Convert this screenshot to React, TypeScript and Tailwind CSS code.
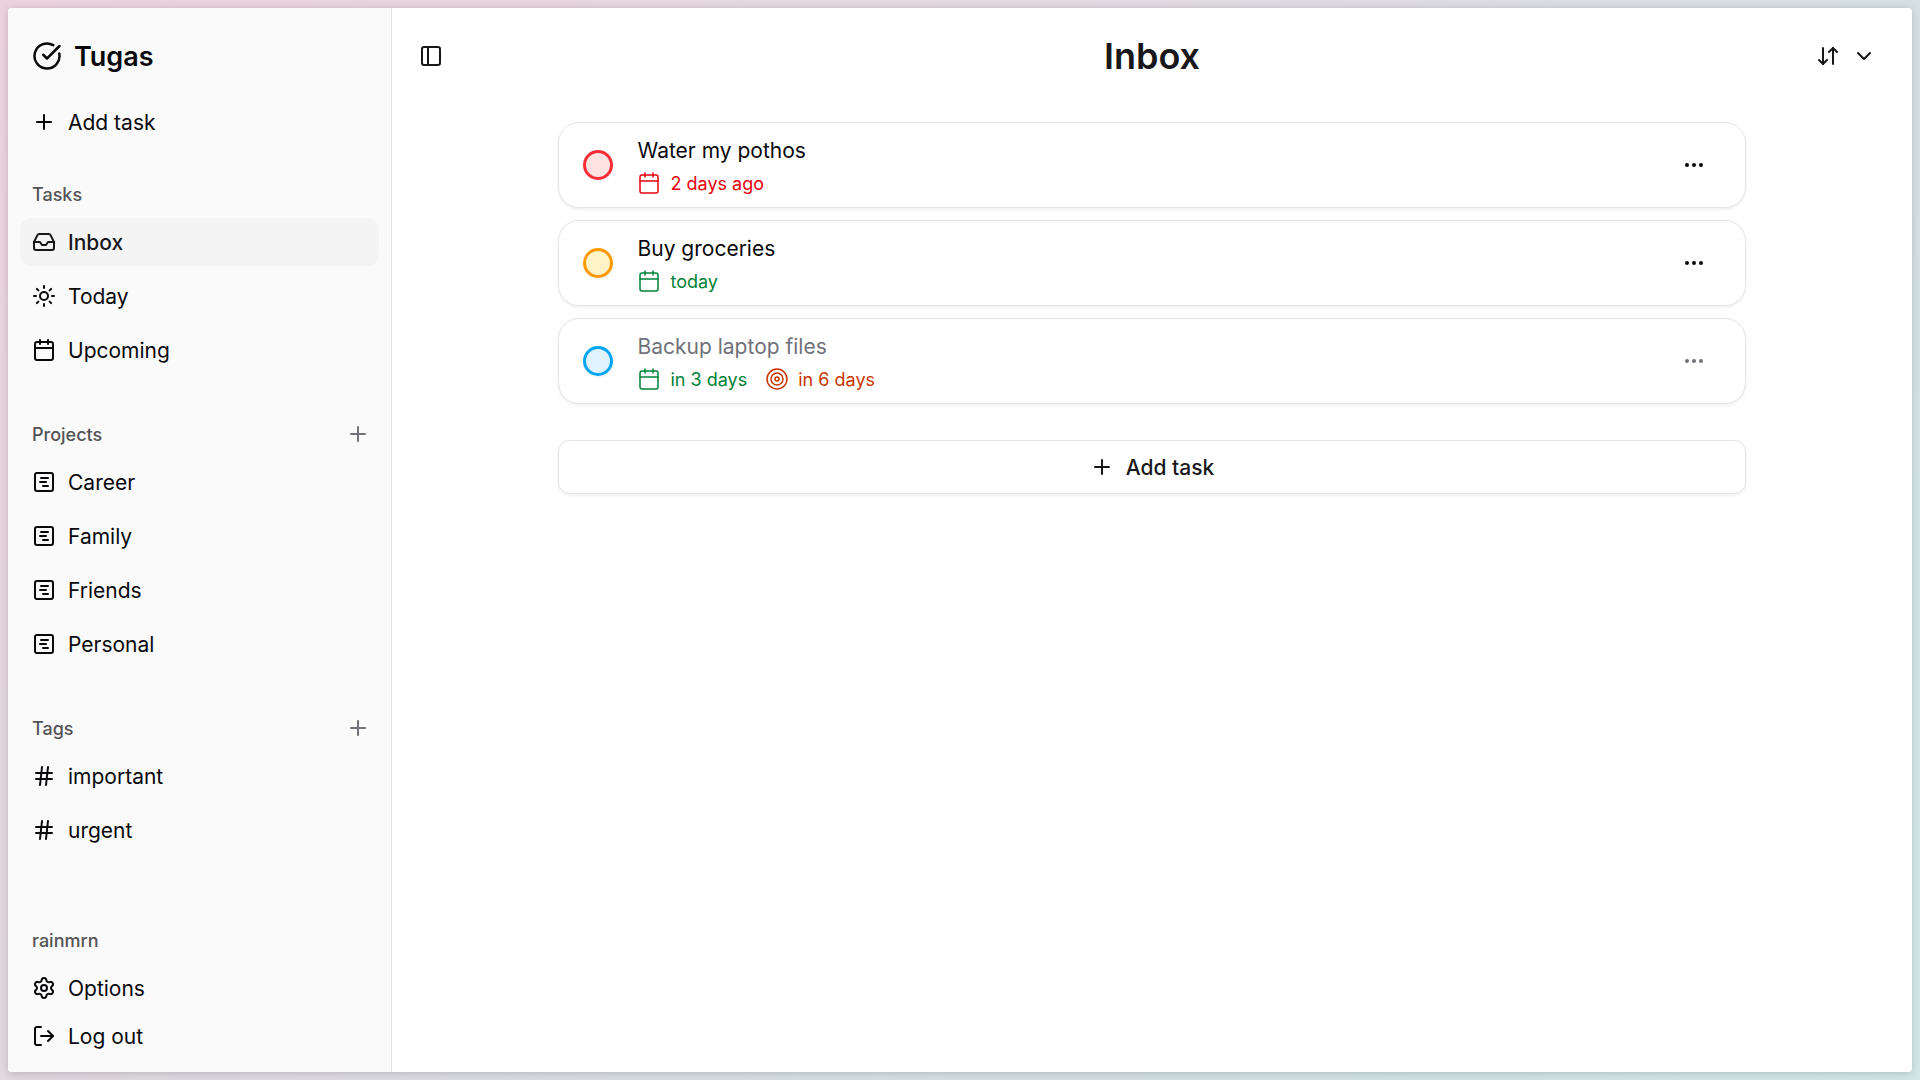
import React from "react";
import {
  ArrowDownUp,
  Calendar,
  ChevronDown,
  CircleCheckBig,
  Ellipsis,
  Hash,
  Inbox,
  LogOut,
  PanelLeft,
  Plus,
  Settings,
  Target,
  type LucideIcon,
} from "lucide-react";

function SquareList({ className }: { className?: string }) {
  return (
    <svg viewBox="0 0 24 24" fill="none" stroke="currentColor" strokeWidth="2" strokeLinecap="round" strokeLinejoin="round" className={className}>
      <rect x="3" y="3" width="18" height="18" rx="2" />
      <path d="M9 8h7M8 12h6M11 16h5" />
    </svg>
  );
}

function SunMedium({ className }: { className?: string }) {
  return (
    <svg viewBox="0 0 24 24" fill="none" stroke="currentColor" strokeWidth="2" strokeLinecap="round" strokeLinejoin="round" className={className}>
      <circle cx="12" cy="12" r="4" />
      <path d="M12 2v2M12 20v2M4.93 4.93l1.41 1.41M17.66 17.66l1.41 1.41M2 12h2M20 12h2M6.34 17.66l-1.41 1.41M19.07 4.93l-1.41 1.41" />
    </svg>
  );
}

type IconType = React.ComponentType<{ className?: string }>;

function NavItem({ icon: Icon, label, active }: { icon: IconType; label: string; active?: boolean }) {
  return (
    <li
      className={
        "flex h-12 items-center gap-3 rounded-xl px-3 text-[21px] leading-[30px] " +
        (active ? "bg-[#f4f4f5] font-[450] text-[#18181b]" : "text-[#09090b]")
      }
    >
      <Icon className="size-6 shrink-0" />
      <span className="pt-0.5">{label}</span>
    </li>
  );
}

function NavLabel({ label, action }: { label: string; action?: boolean }) {
  return (
    <div className="flex h-12 items-center justify-between pr-[9px] pl-3 text-[18px] font-medium text-[#545456]">
      {label}
      {action && <Plus className="size-6 text-[#71717a]" />}
    </div>
  );
}

function NavGroup({ label, action, items }: { label: string; action?: boolean; items: { icon: IconType; label: string; active?: boolean }[] }) {
  return (
    <section className="p-3">
      <NavLabel label={label} action={action} />
      <ul className="flex flex-col gap-1.5">
        {items.map((item) => (
          <NavItem key={item.label} {...item} />
        ))}
      </ul>
    </section>
  );
}

function Meta({ icon: Icon, text, tone }: { icon: LucideIcon; text: string; tone: string }) {
  return (
    <div className={"flex h-6 items-center gap-[9.5px] text-[18px] leading-6 " + tone}>
      <Icon className="size-6" strokeWidth={1.5} />
      <span className="pt-0.5">{text}</span>
    </div>
  );
}

function TaskCard({ title, ring, muted, children }: { title: string; ring: string; muted?: boolean; children: React.ReactNode }) {
  return (
    <li className="flex h-[86px] items-center rounded-[21px] border border-[#e4e4e7] bg-white pr-[39px] pl-6 shadow-[0_1.5px_3px_rgba(0,0,0,0.06)]">
      <div className={"size-[30px] shrink-0 rounded-full border-3 shadow-[0_1.5px_3px_rgba(0,0,0,0.06)] " + ring} />
      <div className="ml-6 flex grow flex-col gap-1.5">
        <div className={"h-[30px] pt-px pl-[0.5px] text-[21px] leading-[30px] " + (muted ? "text-[#71717a]" : "text-[#09090b]")}>{title}</div>
        <div className="flex gap-[17.5px]">{children}</div>
      </div>
      <Ellipsis className={"size-6 " + (muted ? "text-[#71717a]" : "text-[#09090b]")} />
    </li>
  );
}

export default function App() {
  return (
    <div className="h-screen w-screen overflow-hidden bg-[linear-gradient(135deg,#ecd2dd_0%,#dfdbe2_45%,#d7e0e4_62%,#d2e8e7_100%)] p-2 font-['Inter',sans-serif] text-[#09090b]">
      <div className="flex h-full overflow-hidden rounded-[4px] bg-white shadow-[0_1.5px_9px_rgba(0,0,0,0.16)]">
        <aside className="flex w-96 shrink-0 flex-col border-r border-[#e4e4e7] bg-[#fafafa]">
          <div className="flex h-[90px] items-center gap-3 px-6 pt-1.5 text-[27px] font-semibold">
            <CircleCheckBig className="size-[30px]" />
            <span className="pt-0.5">Tugas</span>
          </div>
          <ul className="px-3">
            <NavItem icon={Plus} label="Add task" />
          </ul>
          <nav className="mt-3 flex flex-col gap-3">
            <NavGroup
              label="Tasks"
              items={[
                { icon: Inbox, label: "Inbox", active: true },
                { icon: SunMedium, label: "Today" },
                { icon: Calendar, label: "Upcoming" },
              ]}
            />
            <NavGroup
              label="Projects"
              action
              items={["Career", "Family", "Friends", "Personal"].map((label) => ({ icon: SquareList, label }))}
            />
            <NavGroup label="Tags" action items={["important", "urgent"].map((label) => ({ icon: Hash, label }))} />
          </nav>
          <footer className="mt-auto p-3">
            <NavLabel label="rainmrn" />
            <ul>
              <NavItem icon={Settings} label="Options" />
              <NavItem icon={LogOut} label="Log out" />
            </ul>
          </footer>
        </aside>
        <main className="flex grow flex-col">
          <header className="grid h-24 grid-cols-[1fr_auto_1fr] items-center px-[27px] text-[#18181b]">
            <PanelLeft className="size-6" />
            <h1 className="text-center text-[36px] leading-[54px] font-semibold">Inbox</h1>
            <div className="flex justify-end gap-3 pr-[9px]">
              <ArrowDownUp className="size-6" />
              <ChevronDown className="size-6" />
            </div>
          </header>
          <div className="mx-auto mt-[18px] flex w-[1188px] flex-col gap-9">
            <ul className="flex flex-col gap-3">
              <TaskCard title="Water my pothos" ring="border-[#fb2c36] bg-[#ffe2e2]">
                <Meta icon={Calendar} text="2 days ago" tone="text-[#e7000b]" />
              </TaskCard>
              <TaskCard title="Buy groceries" ring="border-[#fe9a00] bg-[#fef3c6]">
                <Meta icon={Calendar} text="today" tone="text-[#008236]" />
              </TaskCard>
              <TaskCard title="Backup laptop files" ring="border-[#00a6f4] bg-[#dff2fe]" muted>
                <Meta icon={Calendar} text="in 3 days" tone="text-[#008236]" />
                <Meta icon={Target} text="in 6 days" tone="text-[#ca3500]" />
              </TaskCard>
            </ul>
            <button className="flex h-[54px] items-center justify-center gap-3 rounded-xl border border-[#e4e4e7] bg-white text-[21px] font-medium text-[#18181b] shadow-[0_1.5px_3px_rgba(0,0,0,0.05)]">
              <Plus className="size-6" />
              <span className="pt-0.5">Add task</span>
            </button>
          </div>
        </main>
      </div>
    </div>
  );
}
